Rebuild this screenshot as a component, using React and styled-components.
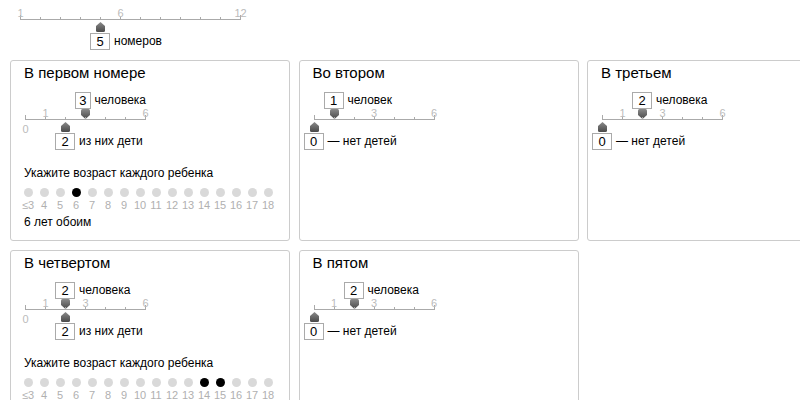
import React from "react";
import styled, { createGlobalStyle } from "styled-components";

const GlobalStyle = createGlobalStyle`
  html, body { margin: 0; padding: 0; overflow: hidden; background: #fff; }
  body { font-family: "Liberation Sans", Arial, sans-serif; color: #000; }
`;

const STEP = 20;

const Page = styled.div`
  width: 900px;
`;

const Header = styled.header`
  box-sizing: border-box;
  height: 60px;
  padding-left: 20px;
`;

const Cards = styled.div`
  display: flex;
  flex-wrap: wrap;
  gap: 9px 8.5px;
  width: 880px;
  padding-left: 10px;
`;

const Card = styled.section`
  box-sizing: border-box;
  display: flex;
  flex-direction: column;
  width: 280px;
  height: 181px;
  border: 1px solid #ccc;
  border-radius: 3px;
  padding: 3px 0 0 13px;
`;

const Title = styled.h2`
  margin: 0;
  font-size: 15px;
  line-height: 18px;
  font-weight: normal;
`;

/* slider: a vertical stack of value row, handle, scale, handle, value row */
const Frame = styled.div`
  display: flex;
  flex-direction: column;
  width: ${(p) => p.$width}px;
  padding-top: ${(p) => p.$pt || 0}px;
  margin-top: ${(p) => p.$mt || 0}px;
  margin-left: ${(p) => p.$ml || 0}px;
`;

/* the scale is a free line: ticks and numbers sit at their values */
const Scale = styled.div`
  position: relative;
  height: 1px;
  background: #aaa;
`;

const Tick = styled.div`
  position: absolute;
  bottom: 1px;
  width: 1px;
  height: ${(p) => (p.$end ? 4 : 2)}px;
  background: #aaa;
`;

const ScaleLabel = styled.span`
  position: absolute;
  top: ${(p) => (p.$below ? "4px" : "-12px")};
  font-size: 11px;
  line-height: 12px;
  color: #bbb;
  transform: translateX(-50%);
`;

const HandleIcon = styled.svg`
  display: block;
  flex: none;
  width: 9px;
  height: 10px;
  margin-top: ${(p) => (p.$dir === "up" ? "2px" : "0")};
`;

const ValueRow = styled.div`
  display: flex;
  align-items: center;
  white-space: nowrap;
  margin-top: ${(p) => (p.$lower ? "1px" : "0")};
`;

const ValueBox = styled.span`
  box-sizing: border-box;
  width: 20px;
  height: 17px;
  border: 1px solid #aaa;
  background: #fff;
  font-size: 13px;
  line-height: 15px;
  text-align: center;
`;

const Caption = styled.span`
  margin-left: 4px;
  font-size: 12px;
  line-height: 15px;
`;

const Prompt = styled.div`
  margin-top: 16px;
  font-size: 12px;
  line-height: 14px;
`;

const AgeGrid = styled.div`
  display: grid;
  grid-template-columns: repeat(16, 16px);
  margin-left: -4px;
  margin-top: 8px;
  justify-items: center;
  row-gap: 2px;
`;

const Dot = styled.span`
  width: 9px;
  height: 9px;
  border-radius: 50%;
  background: ${(p) => (p.$on ? "#000" : "#d9d9d9")};
`;

const AgeLabel = styled.span`
  font-size: 11px;
  line-height: 12px;
  color: #b0b0b0;
`;

const Summary = styled.div`
  margin-top: 4px;
  font-size: 12px;
  line-height: 14px;
`;

function Handle({ x, dir }) {
  const id = `g-${dir}`;
  const d =
    dir === "down"
      ? "M1.5 0 H7.5 Q9 0 9 1.5 V6 L4.5 10 L0 6 V1.5 Q0 0 1.5 0 Z"
      : "M4.5 0 L9 4 V8.5 Q9 10 7.5 10 H1.5 Q0 10 0 8.5 V4 Z";
  return (
    <HandleIcon viewBox="0 0 9 10" $dir={dir} style={{ marginLeft: x - 4 }}>
      <defs>
        <linearGradient id={id} x1="0" y1="0" x2="0" y2="1">
          <stop offset="0" stopColor="#8a8a8a" />
          <stop offset="1" stopColor="#4a4a4a" />
        </linearGradient>
      </defs>
      <path d={d} fill={`url(#${id})`} />
    </HandleIcon>
  );
}

function Value({ x, value, text, lower }) {
  return (
    <ValueRow $lower={lower} style={{ marginLeft: x - 10 }}>
      <ValueBox>{value}</ValueBox>
      <Caption>{text}</Caption>
    </ValueRow>
  );
}

function Slider({ min, max, labels, upper, lower, pt, mt, ml }) {
  const range = max - min;
  const pos = (v) => (v - min) * STEP;
  const ticks = [];
  for (let v = min; v <= max; v++) ticks.push(v);
  return (
    <Frame $width={range * STEP + 1} $pt={pt} $mt={mt} $ml={ml}>
      {upper && (
        <>
          <Value x={pos(upper.value)} value={upper.value} text={upper.text} />
          <Handle x={pos(upper.value)} dir="down" />
        </>
      )}
      <Scale>
        {ticks.map((v) => (
          <Tick key={v} $end={v === min || v === max} style={{ left: pos(v) }} />
        ))}
        {labels.map(({ v, below }) => (
          <ScaleLabel key={v} $below={below} style={{ left: pos(v) + 0.5 }}>
            {v}
          </ScaleLabel>
        ))}
      </Scale>
      {lower && (
        <>
          <Handle x={pos(lower.value)} dir="up" />
          <Value x={pos(lower.value)} value={lower.value} text={lower.text} lower />
        </>
      )}
    </Frame>
  );
}

const AGES = ["≤3", 4, 5, 6, 7, 8, 9, 10, 11, 12, 13, 14, 15, 16, 17, 18];

const ROOMS = [
  { title: "В первом номере", persons: 3, children: 2, ages: [6], summary: "6 лет обоим" },
  { title: "Во втором", persons: 1, children: 0 },
  { title: "В третьем", persons: 2, children: 0 },
  { title: "В четвертом", persons: 2, children: 2, ages: [14, 15] },
  { title: "В пятом", persons: 2, children: 0 },
];

const personsWord = (n) => (n >= 2 && n <= 4 ? "человека" : "человек");

function Room({ room }) {
  const taken = [room.persons, room.children];
  const labels = [{ v: 0, below: true }, { v: 1 }, { v: 3 }, { v: 6 }].filter(
    (l) => !taken.includes(l.v)
  );
  return (
    <Card>
      <Title>{room.title}</Title>
      <Slider
        min={0}
        max={6}
        mt={10}
        ml={1}
        labels={labels}
        upper={{ value: room.persons, text: personsWord(room.persons) }}
        lower={{
          value: room.children,
          text: room.children === 0 ? "— нет детей" : "из них дети",
        }}
      />
      {room.children > 0 && (
        <>
          <Prompt>Укажите возраст каждого ребенка</Prompt>
          <AgeGrid>
            {AGES.map((a) => (
              <Dot key={`d${a}`} $on={room.ages.includes(a)} />
            ))}
            {AGES.map((a) => (
              <AgeLabel key={`l${a}`}>{a}</AgeLabel>
            ))}
          </AgeGrid>
          {room.summary && <Summary>{room.summary}</Summary>}
        </>
      )}
    </Card>
  );
}

export default function App() {
  return (
    <Page>
      <GlobalStyle />
      <Header>
        <Slider
          min={1}
          max={12}
          pt={19}
          labels={[{ v: 1 }, { v: 6 }, { v: 12 }]}
          lower={{ value: 5, text: "номеров" }}
        />
      </Header>
      <Cards>
        {ROOMS.map((r) => (
          <Room key={r.title} room={r} />
        ))}
      </Cards>
    </Page>
  );
}
